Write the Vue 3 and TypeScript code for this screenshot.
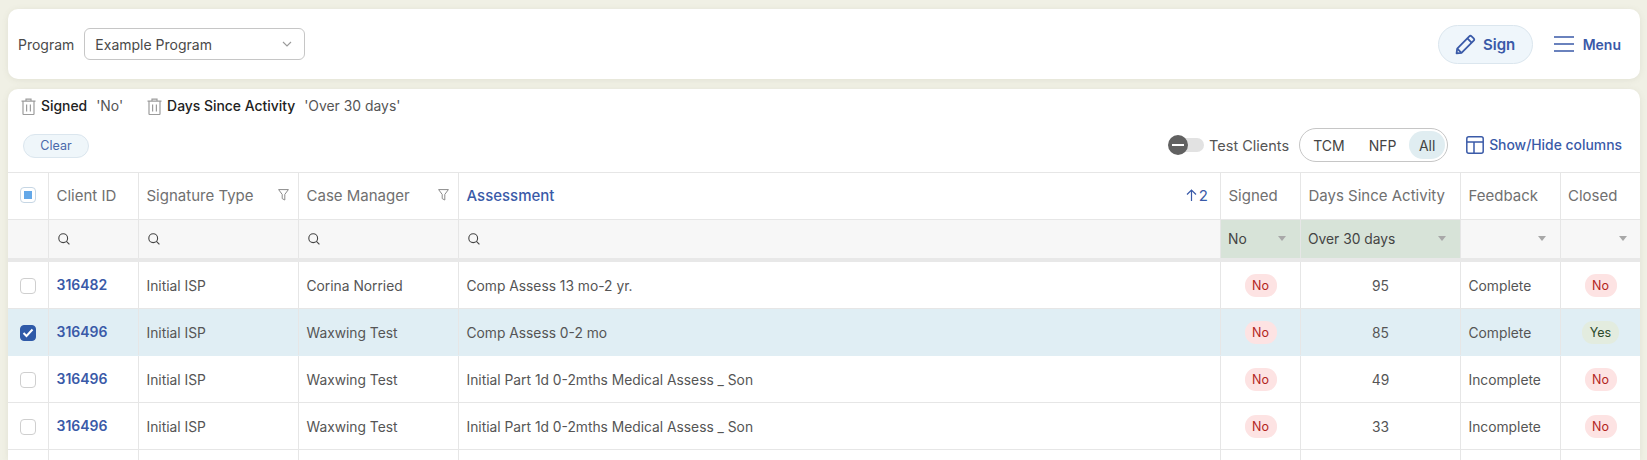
<script setup lang="ts">
interface Row {
  id: string
  type: string
  manager: string
  assessment: string
  days: string
  feedback: string
  closed: 'Yes' | 'No'
  selected: boolean
}

const rows: Row[] = [
  { id: '316482', type: 'Initial ISP', manager: 'Corina Norried', assessment: 'Comp Assess 13 mo-2 yr.', days: '95', feedback: 'Complete', closed: 'No', selected: false },
  { id: '316496', type: 'Initial ISP', manager: 'Waxwing Test', assessment: 'Comp Assess 0-2 mo', days: '85', feedback: 'Complete', closed: 'Yes', selected: true },
  { id: '316496', type: 'Initial ISP', manager: 'Waxwing Test', assessment: 'Initial Part 1d 0-2mths Medical Assess _ Son', days: '49', feedback: 'Incomplete', closed: 'No', selected: false },
  { id: '316496', type: 'Initial ISP', manager: 'Waxwing Test', assessment: 'Initial Part 1d 0-2mths Medical Assess _ Son', days: '33', feedback: 'Incomplete', closed: 'No', selected: false },
]

const filters = [
  { name: 'Signed', value: "'No'" },
  { name: 'Days Since Activity', value: "'Over 30 days'" },
]
</script>

<template>
  <div class="page">
    <section class="card top">
      <div class="program">
        <span class="program-label">Program</span>
        <div class="select">
          <span>Example Program</span>
          <svg width="10" height="6" viewBox="0 0 10 6" fill="none" stroke="#9a9a9a" stroke-width="1.1"><path d="M1 1l4 4 4-4" /></svg>
        </div>
      </div>
      <div class="actions">
        <button class="sign">
          <svg width="21" height="21" viewBox="0 0 20 20" fill="none" stroke="#3a5aa8" stroke-width="1.7" stroke-linejoin="round">
            <path d="M1.5 18.5l.6-4.6L13.6 2.2a1.6 1.6 0 0 1 2.2 0l2 2a1.6 1.6 0 0 1 0 2.2L6.2 18l-4.7.5z" />
            <path d="M11.8 4.2l4 4M2.2 14l3.9 4" />
          </svg>
          <span>Sign</span>
        </button>
        <div class="menu">
          <svg width="20" height="16" viewBox="0 0 20 16" fill="none" stroke="#3a5aa8" stroke-width="1.6"><path d="M0 1h20M0 8h20M0 15h20" /></svg>
          <span>Menu</span>
        </div>
      </div>
    </section>

    <section class="card main">
      <div class="chips">
        <div v-for="f in filters" :key="f.name" class="chip">
          <svg width="15" height="17" viewBox="0 0 15 17" fill="none" stroke="#9c9c9c" stroke-width="1.2">
            <path d="M0.5 3.2h14M5 3V1.2h5V3M2 3.4v12.4a.7.7 0 0 0 .7.7h9.6a.7.7 0 0 0 .7-.7V3.4M5.6 6.5v7M9.4 6.5v7" />
          </svg>
          <span class="chip-name">{{ f.name }}</span>
          <span class="chip-value">{{ f.value }}</span>
        </div>
      </div>

      <div class="toolbar">
        <button class="clear">Clear</button>
        <div class="tools">
          <div class="toggle">
            <span class="track"></span>
            <span class="knob"><i></i></span>
          </div>
          <span class="toggle-label">Test Clients</span>
          <div class="segments">
            <span class="seg">TCM</span>
            <span class="seg">NFP</span>
            <span class="seg on">All</span>
          </div>
          <div class="columns-btn">
            <svg width="18" height="18" viewBox="0 0 18 18" fill="none" stroke="#3a5aa8" stroke-width="1.5"><rect x="0.8" y="0.8" width="16.4" height="16.4" rx="2" /><path d="M1 6h16M8 6v11" /></svg>
            <span>Show/Hide columns</span>
          </div>
        </div>
      </div>

      <div class="table">
        <div class="row head">
          <div class="cell center">
            <span class="box partial"><i></i></span>
          </div>
          <div class="cell">Client ID</div>
          <div class="cell between">
            <span>Signature Type</span>
            <svg class="funnel" width="11" height="12" viewBox="0 0 11 12" fill="none" stroke="#8a8a8a" stroke-width="1"><path d="M.6.6h9.8L6.8 5.4v5.6L4.2 9.6V5.4z" stroke-linejoin="round" /></svg>
          </div>
          <div class="cell between">
            <span>Case Manager</span>
            <svg class="funnel" width="11" height="12" viewBox="0 0 11 12" fill="none" stroke="#8a8a8a" stroke-width="1"><path d="M.6.6h9.8L6.8 5.4v5.6L4.2 9.6V5.4z" stroke-linejoin="round" /></svg>
          </div>
          <div class="cell between sorted">
            <span>Assessment</span>
            <span class="sort">
              <svg width="11" height="12" viewBox="0 0 11 12" fill="none" stroke="#3a5aa8" stroke-width="1.2"><path d="M5.5 12V1M1 5.5L5.5 1 10 5.5" /></svg>
              <span>2</span>
            </span>
          </div>
          <div class="cell">Signed</div>
          <div class="cell">Days Since Activity</div>
          <div class="cell">Feedback</div>
          <div class="cell">Closed</div>
        </div>

        <div class="row filter">
          <div class="cell"></div>
          <div v-for="n in 4" :key="n" class="cell">
            <svg width="12" height="12" viewBox="0 0 12 12" fill="none" stroke="#444" stroke-width="1.1"><circle cx="5.2" cy="5.2" r="4.4" /><path d="M8.4 8.4l3 3" /></svg>
          </div>
          <div class="cell drop active"><span>No</span><i class="caret"></i></div>
          <div class="cell drop active"><span>Over 30 days</span><i class="caret"></i></div>
          <div class="cell drop"><span></span><i class="caret"></i></div>
          <div class="cell drop"><span></span><i class="caret"></i></div>
        </div>

        <div v-for="(r, i) in rows" :key="i" class="row body" :class="{ selected: r.selected }">
          <div class="cell center">
            <span class="box" :class="{ checked: r.selected }">
              <svg v-if="r.selected" width="12" height="10" viewBox="0 0 12 10" fill="none" stroke="#fff" stroke-width="2"><path d="M1.5 5l3 3 6-6.5" /></svg>
            </span>
          </div>
          <div class="cell link">{{ r.id }}</div>
          <div class="cell">{{ r.type }}</div>
          <div class="cell">{{ r.manager }}</div>
          <div class="cell">{{ r.assessment }}</div>
          <div class="cell center"><span class="pill no">No</span></div>
          <div class="cell center">{{ r.days }}</div>
          <div class="cell">{{ r.feedback }}</div>
          <div class="cell center"><span class="pill" :class="r.closed === 'Yes' ? 'yes' : 'no'">{{ r.closed }}</span></div>
        </div>

        <div class="row body">
          <div v-for="n in 9" :key="n" class="cell"></div>
        </div>
      </div>
    </section>
  </div>
</template>

<style>
html, body {
  margin: 0;
  height: 460px;
  overflow: hidden;
  background: #f0f0e5;
}
</style>

<style scoped>
.page {
  height: 460px;
  box-sizing: border-box;
  padding: 9px 7px 0 8px;
  display: flex;
  flex-direction: column;
  gap: 10px;
  overflow: hidden;
  font-family: Inter, "Liberation Sans", sans-serif;
  font-size: 14px;
  color: #555;
}
.card {
  background: #fff;
  border-radius: 10px;
  box-shadow: 0 1px 6px rgba(120, 120, 90, 0.12);
}
.top {
  height: 70px;
  flex: none;
  display: flex;
  align-items: center;
  justify-content: space-between;
  padding: 0 19px 0 10px;
  box-sizing: border-box;
}
.program {
  display: flex;
  align-items: center;
  gap: 10px;
}
.program-label {
  color: #4a4a4a;
}
.select {
  width: 221px;
  height: 32px;
  box-sizing: border-box;
  border: 1px solid #c6c6c6;
  border-radius: 6px;
  display: flex;
  align-items: center;
  justify-content: space-between;
  padding: 0 12px 0 10px;
  color: #4a4a4a;
}
.actions {
  display: flex;
  align-items: center;
  gap: 21px;
}
.sign {
  width: 95px;
  height: 39px;
  box-sizing: border-box;
  border: 1px solid #dbe6ee;
  border-radius: 20px;
  background: #eff6fb;
  display: flex;
  align-items: center;
  justify-content: center;
  gap: 7px;
  padding: 0;
  font: 600 15px Inter, "Liberation Sans", sans-serif;
  color: #3a5aa8;
}
.menu {
  display: flex;
  align-items: center;
  gap: 9px;
  font-weight: 600;
  color: #3a5aa8;
}
.main {
  flex: 1;
  min-height: 0;
  overflow: hidden;
  border-radius: 10px 10px 0 0;
}
.chips {
  display: flex;
  gap: 24px;
  padding: 5px 0 0 13px;
  height: 24px;
  align-items: center;
  font-size: 13.9px;
  color: #555;
}
.chip {
  display: flex;
  align-items: center;
}
.chip-name {
  margin-left: 5px;
  color: #222;
  font-weight: 500;
}
.chip-value {
  margin-left: 9px;
  color: #555;
}
.toolbar {
  display: flex;
  justify-content: space-between;
  align-items: center;
  height: 34px;
  margin-top: 10px;
  padding: 0 18px 0 15px;
}
.clear {
  width: 66px;
  height: 24px;
  margin-top: 1px;
  box-sizing: border-box;
  border: 1px solid #dbe6ee;
  border-radius: 12px;
  background: #eff6fa;
  padding: 0;
  font: 400 12.5px Inter, "Liberation Sans", sans-serif;
  color: #4a68aa;
}
.tools {
  display: flex;
  align-items: center;
}
.toggle {
  position: relative;
  width: 36px;
  height: 20px;
  margin-right: 5px;
}
.track {
  position: absolute;
  left: 3px;
  top: 3px;
  width: 33px;
  height: 14px;
  border-radius: 7px;
  background: #e2e2e2;
}
.knob {
  position: absolute;
  left: 0;
  top: 0;
  width: 20px;
  height: 20px;
  border-radius: 50%;
  background: #616161;
  display: flex;
  align-items: center;
  justify-content: center;
}
.knob i {
  width: 12px;
  height: 2px;
  background: #fff;
}
.toggle-label {
  font-size: 14.5px;
  color: #555;
  margin-right: 10px;
}
.segments {
  width: 149px;
  height: 34px;
  box-sizing: border-box;
  border: 1px solid #c6c6c6;
  border-radius: 17px;
  display: flex;
  align-items: center;
  padding: 0 2px 0 3px;
  margin-right: 18px;
  color: #444;
}
.seg {
  height: 28px;
  display: flex;
  align-items: center;
  justify-content: center;
  padding: 0 10px;
}
.seg:first-child {
  margin-right: 4px;
}
.seg.on {
  width: 36px;
  box-sizing: border-box;
  padding: 0;
  margin-left: auto;
  background: #e0edf1;
  border-radius: 14px;
}
.columns-btn {
  display: flex;
  align-items: center;
  gap: 5px;
  font-weight: 500;
  font-size: 13.9px;
  color: #3a5aa8;
}
.table {
  margin-top: 10px;
  border-top: 1px solid #e6e6e6;
}
.row {
  display: grid;
  grid-template-columns: 41px 90px 160px 160px 1fr 80px 160px 100px 79px;
}
.cell {
  display: flex;
  align-items: center;
  padding: 0 7.5px;
  border-right: 1px solid #e6e6e6;
  box-sizing: border-box;
  min-width: 0;
  white-space: nowrap;
}
.cell:last-child {
  border-right: 0;
}
.center {
  justify-content: center;
}
.between {
  justify-content: space-between;
}
.head {
  height: 47px;
  border-bottom: 1px solid #e6e6e6;
  box-sizing: border-box;
  font-size: 15px;
  color: #707070;
}
.head .cell {
  padding-bottom: 2px;
}
.head .cell:last-child {
  padding-left: 7px;
}
.funnel {
  margin-right: 2px;
}
.sorted {
  color: #3a5aa8;
  font-weight: 500;
  padding-right: 12px;
}
.sort {
  display: flex;
  align-items: center;
  gap: 2px;
  font-weight: 400;
}
.filter {
  height: 42px;
  box-sizing: border-box;
  background: #f7f7f7;
  border-bottom: 4px solid #e8e8e8;
  font-size: 13.8px;
  color: #444;
}
.filter .cell:nth-child(n + 2):nth-child(-n + 5) {
  padding-left: 9px;
}
.drop {
  justify-content: space-between;
  padding-left: 7px;
  padding-right: 14px;
}
.filter .drop:last-child {
  padding-right: 13px;
}
.drop.active {
  background: #d7e3d8;
}
.caret {
  width: 0;
  height: 0;
  margin-bottom: 2px;
  border-left: 4.5px solid transparent;
  border-right: 4.5px solid transparent;
  border-top: 5px solid #a8a8a8;
}
.body {
  height: 47px;
  box-sizing: border-box;
  border-bottom: 1px solid #e6e6e6;
  background: #fff;
  font-size: 13.8px;
  color: #555;
}
.body .cell {
  padding-top: 1px;
}
.body.selected {
  background: #e0eef4;
  border-bottom-color: #e0eef4;
}
.body .link {
  font-size: 14px;
  font-weight: 600;
  color: #3a5aa8;
  padding-top: 0;
  padding-bottom: 2px;
}
.box {
  width: 16px;
  height: 16px;
  box-sizing: border-box;
  border: 1px solid #cfcfcf;
  border-radius: 4px;
  background: #fff;
  display: flex;
  align-items: center;
  justify-content: center;
}
.box.partial {
  border-color: #c6d6e4;
}
.box.partial i {
  width: 8px;
  height: 8px;
  background: #64a8e8;
}
.box.checked {
  background: #2f5aa8;
  border-color: #2f5aa8;
}
.pill {
  height: 23px;
  min-width: 32px;
  box-sizing: border-box;
  padding: 0 6px;
  border-radius: 11px;
  display: inline-flex;
  align-items: center;
  justify-content: center;
  font-size: 12.5px;
  font-weight: 400;
}
.pill.no {
  background: #fde3e3;
  color: #b3261e;
}
.pill.yes {
  background: #e3ecdf;
  color: #2c4a2c;
  padding: 0 8px;
}
</style>
